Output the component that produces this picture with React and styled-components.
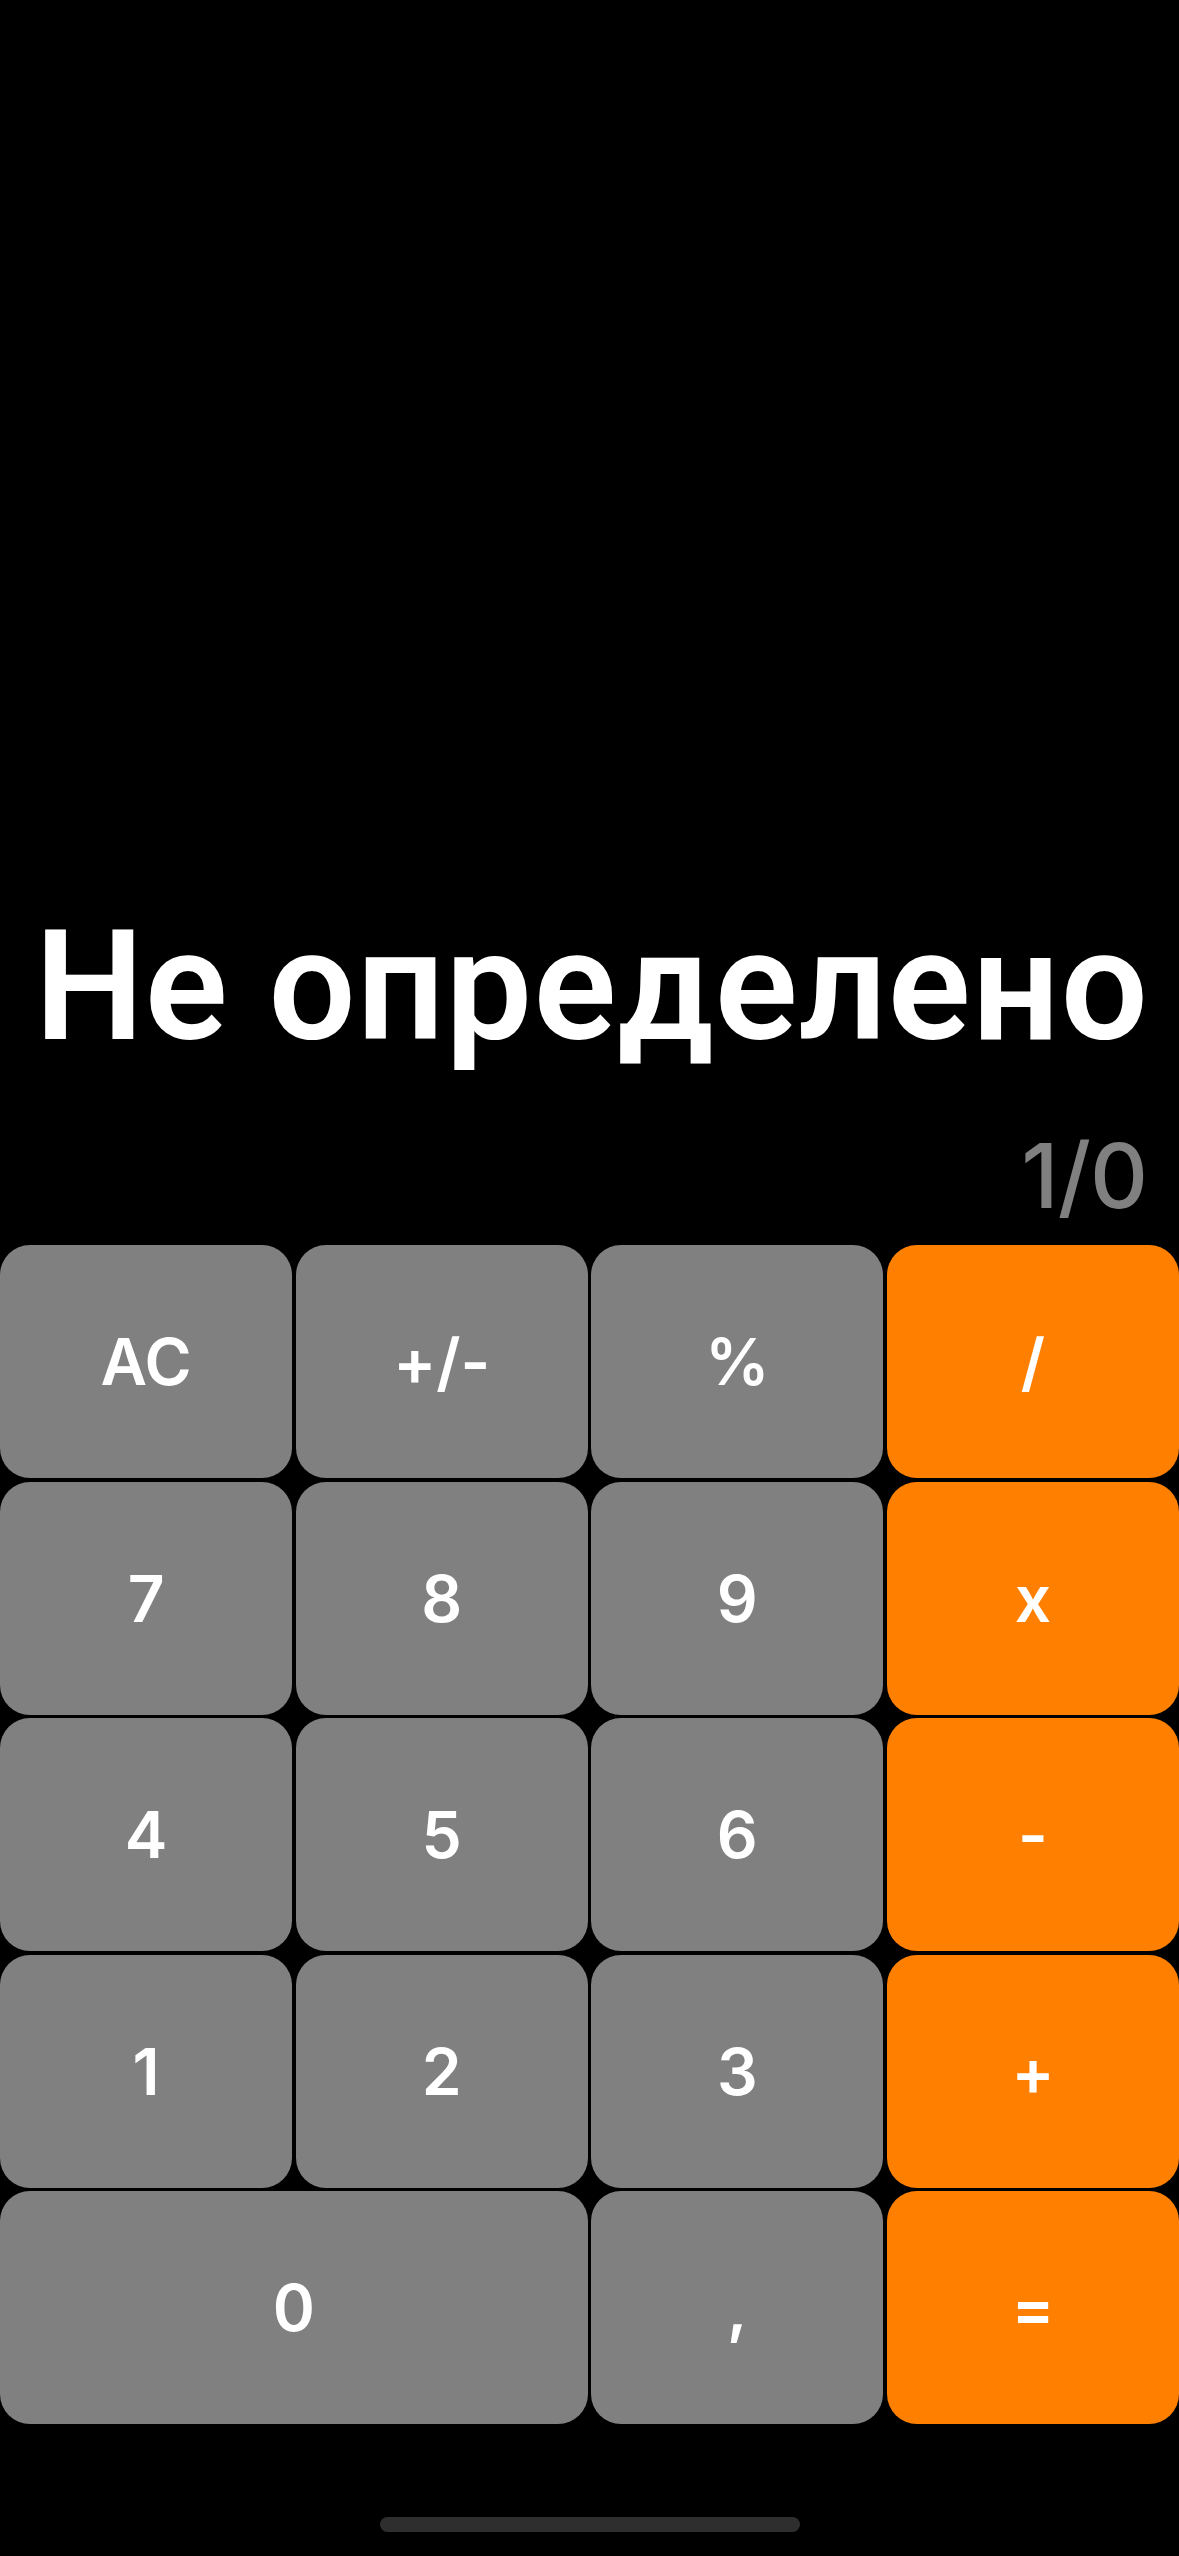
import React from 'react';
import styled, { createGlobalStyle } from 'styled-components';

const GlobalStyle = createGlobalStyle`
  html, body {
    margin: 0;
    padding: 0;
    background: #000;
  }

  body {
    font-family: Inter, "Noto Sans", "Liberation Sans", sans-serif;
  }
`;

const keys = [
  { label: 'AC' },
  { label: '+/-' },
  { label: '%' },
  { label: '/', accent: true },
  { label: '7' },
  { label: '8' },
  { label: '9' },
  { label: 'x', accent: true },
  { label: '4' },
  { label: '5' },
  { label: '6' },
  { label: '-', accent: true },
  { label: '1' },
  { label: '2' },
  { label: '3' },
  { label: '+', accent: true },
  { label: '0', wide: true },
  { label: ',' },
  { label: '=', accent: true },
];

const Calculator = () => {
  return (
    <Screen>
      <GlobalStyle />
      <Display>
        <Result>Не определено</Result>
        <Expression>1/0</Expression>
      </Display>
      <Keypad>
        {keys.map((key) => (
          <Key key={key.label} $accent={key.accent} $wide={key.wide}>
            {key.label}
          </Key>
        ))}
      </Keypad>
      <Footer>
        <HomeIndicator />
      </Footer>
    </Screen>
  );
};

const Screen = styled.div`
  width: 1179px;
  height: 2556px;
  background: #000;
  display: flex;
  flex-direction: column;
  overflow: hidden;
`;

const Display = styled.div`
  flex: 1;
  display: flex;
  flex-direction: column;
  justify-content: flex-end;
  align-items: flex-end;
  padding: 0 30px 25px 0;
`;

const Result = styled.div`
  color: #fff;
  font-family: Roboto, Inter, "Noto Sans", sans-serif;
  font-size: 154px;
  font-weight: 600;
  line-height: 154px;
  letter-spacing: 1.2px;
  white-space: nowrap;
  margin-bottom: 68px;
`;

const Expression = styled.div`
  color: #808080;
  font-size: 90px;
  font-weight: 500;
  line-height: 88px;
  letter-spacing: -1px;
  margin-right: 2px;
`;

const Keypad = styled.div`
  display: grid;
  grid-template-columns: repeat(4, 1fr);
  grid-auto-rows: 233px;
  column-gap: 3.5px;
  row-gap: 3.5px;
`;

const Key = styled.button`
  grid-column: ${(p) => (p.$wide ? 'span 2' : 'span 1')};
  border: none;
  border-radius: 30px;
  background: ${(p) => (p.$accent ? '#ff8000' : '#808080')};
  color: #fff;
  font-family: Inter, "Noto Sans", "Liberation Sans", sans-serif;
  font-size: 64px;
  font-weight: 600;
  display: flex;
  align-items: center;
  justify-content: center;
  padding: 0;
`;

const Footer = styled.div`
  height: 132px;
  display: flex;
  align-items: flex-end;
  justify-content: center;
  padding-bottom: 24px;
  box-sizing: border-box;
`;

const HomeIndicator = styled.div`
  width: 420px;
  height: 15px;
  border-radius: 8px;
  background: #2e2e2e;
`;

export default Calculator;
